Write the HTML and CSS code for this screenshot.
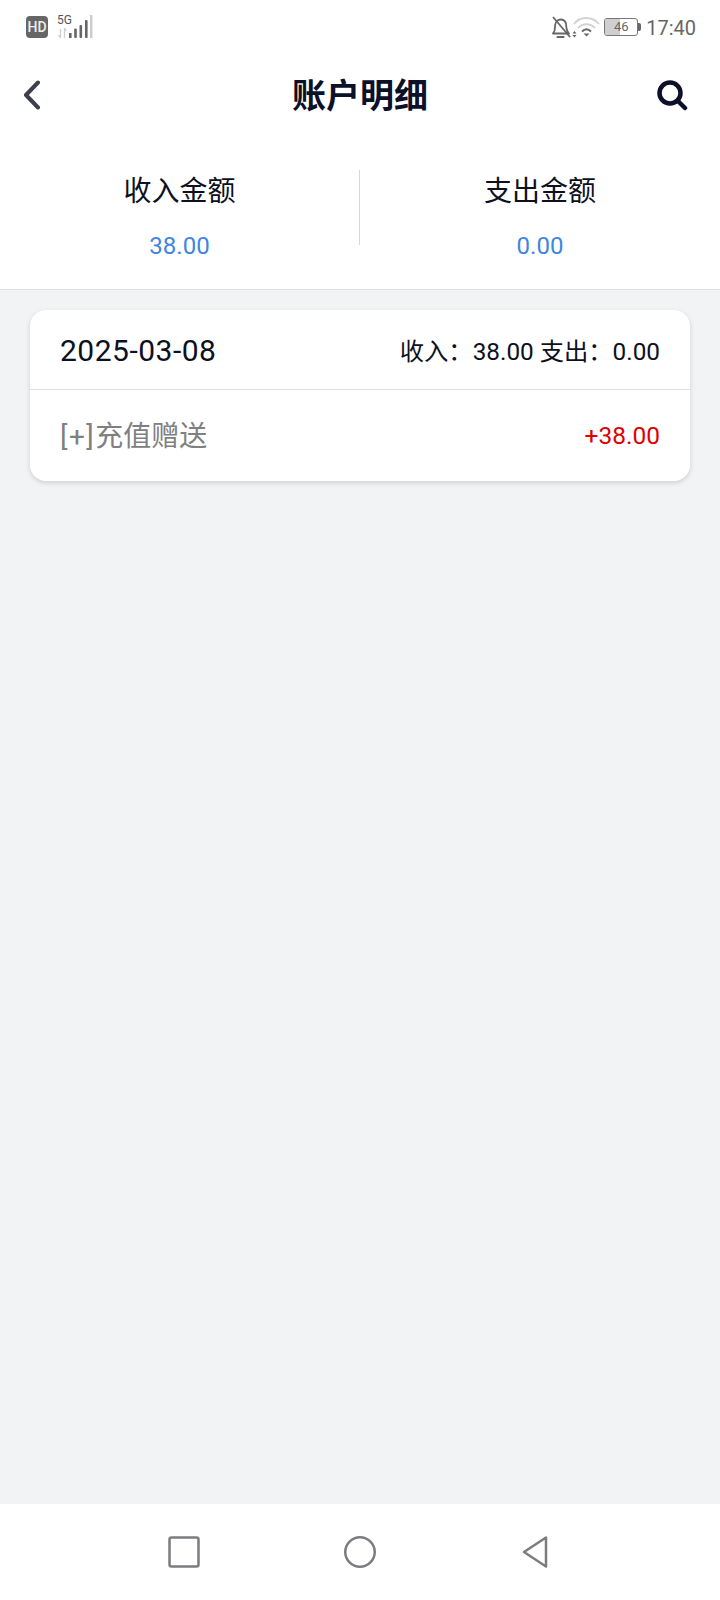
FILE: index.html
```html
<!DOCTYPE html>
<html lang="zh-CN">
<head>
  <meta charset="UTF-8">
  <meta name="viewport" content="width=device-width, initial-scale=1.0">
  <title>账户明细</title>
  <link rel="stylesheet" href="styles.css">
</head>
<body>
  <!-- Status bar -->
  <div class="status-bar">
    <div class="status-left">
      <span class="hd">HD</span>
      <div class="signal">
        <span class="five-g">5G</span>
        <svg width="38" height="26" viewBox="0 0 38 26">
          <g stroke="#d0d0d0" stroke-width="1.300" fill="none">
            <path d="M3.500 16v9M1.500 22l2 3M7.500 15v10M7.500 15l2 3"/>
          </g>
          <g fill="#666">
            <rect x="12" y="20" width="2.600" height="5"/>
            <rect x="17.200" y="15.500" width="2.600" height="9.500" rx="1"/>
            <rect x="22.500" y="12" width="2.600" height="13" rx="1"/>
            <rect x="28" y="7" width="2.600" height="18" rx="1"/>
          </g>
          <rect x="33" y="2" width="2.400" height="23" fill="#ccc"/>
        </svg>
      </div>
    </div>
    <div class="status-right">
      <svg class="bell" width="24" height="24" viewBox="0 0 24 24" fill="none" stroke="#666" stroke-width="1.800">
        <path d="M4 18.500c1.500-1.500 2-3 2-6.500 0-4 2-7.500 5.500-7.500 3 0 4.800 1.500 5.500 4l.5 5c.3 2 1.200 3.500 2.500 5z" stroke-linejoin="round"/>
        <path d="M8.500 22h6" stroke-linecap="round" stroke-width="2.200"/>
        <path d="M4 2l17 20"/>
      </svg>
      <svg class="wifi" width="28" height="24" viewBox="0 0 28 24" fill="none">
        <path d="M2 9C8 1 20 1 27 9" stroke="#d2d2d2" stroke-width="1.800"/>
        <path d="M6 13c5-5 12-5 17 0" stroke="#d2d2d2" stroke-width="1.800"/>
        <path d="M10 16.500c3-3 6-3 9 0" stroke="#666" stroke-width="2"/>
        <path d="M11.500 18.500h6L14.500 21.500z" fill="#666"/>
        <path d="M0.500 18.500l2-2.500 2 2.500zM0.500 20l2 2.500 2-2.500z" fill="#666"/>
      </svg>
      <div class="battery">
        <div class="battery-body">
          <div class="battery-fill"></div>
          <span class="battery-num">46</span>
        </div>
        <div class="battery-cap"></div>
      </div>
      <span class="clock">17:40</span>
    </div>
  </div>

  <!-- Title bar -->
  <div class="nav-bar">
    <svg class="nav-back" width="20" height="30" viewBox="0 0 20 30" fill="none">
      <path d="M15 2.500L3 15l12 12.500" stroke="#3c3f4c" stroke-width="4" stroke-linecap="round" stroke-linejoin="round"/>
    </svg>
    <h1 class="nav-title">账户明细</h1>
    <svg class="nav-search" width="32" height="32" viewBox="0 0 32 32" fill="none">
      <circle cx="14" cy="14" r="10.500" stroke="#0c1028" stroke-width="4.500"/>
      <path d="M22 22l7 7" stroke="#0c1028" stroke-width="4.500" stroke-linecap="round"/>
    </svg>
  </div>

  <!-- Totals -->
  <div class="summary">
    <div class="summary-col">
      <div class="summary-label">收入金额</div>
      <div class="summary-value">38.00</div>
    </div>
    <div class="summary-col">
      <div class="summary-label">支出金额</div>
      <div class="summary-value">0.00</div>
    </div>
  </div>

  <div class="content">
    <div class="card">
      <div class="card-head">
        <span class="card-date">2025-03-08</span>
        <span class="card-total">收入：38.00 支出：0.00</span>
      </div>
      <div class="card-row">
        <span class="row-name"><span class="row-tag">[+]</span>充值赠送</span>
        <span class="row-amount">+38.00</span>
      </div>
    </div>
  </div>

  <!-- System navigation -->
  <div class="sys-nav">
    <svg width="34" height="34" viewBox="0 0 34 34" fill="none">
      <rect x="2.500" y="2.500" width="29" height="29" rx="2" stroke="#7c7c80" stroke-width="2.500"/>
    </svg>
    <svg width="34" height="34" viewBox="0 0 34 34" fill="none">
      <circle cx="17" cy="17" r="14.750" stroke="#7c7c80" stroke-width="2.500"/>
    </svg>
    <svg width="30" height="34" viewBox="0 0 30 34" fill="none">
      <path d="M27 2.500v29L5 17z" stroke="#7c7c80" stroke-width="2.500" stroke-linejoin="round"/>
    </svg>
  </div>
</body>
</html>
```

FILE: styles.css
```css
* {
  box-sizing: border-box;
}
body {
  margin: 0;
  width: 720px;
  height: 1600px;
  display: flex;
  flex-direction: column;
  background: #f2f3f5;
  font-family: Roboto, "Noto Sans CJK SC", sans-serif;
  color: #0c1020;
}
.status-bar {
  height: 54px;
  padding: 13px 24px 0 26px;
  display: flex;
  justify-content: space-between;
  align-items: flex-start;
  background: white;
}
.status-left {
  display: flex;
  align-items: flex-start;
  gap: 9px;
}
.hd {
  width: 22px;
  height: 22px;
  margin-top: 3px;
  border-radius: 4px;
  background: #666;
  color: #eee;
  font-size: 14px;
  font-weight: 500;
  line-height: 22px;
  text-align: center;
}
.signal {
  position: relative;
  width: 38px;
  height: 26px;
}
.five-g {
  position: absolute;
  left: 0;
  top: 1px;
  font-size: 12px;
  line-height: 12px;
  color: #555;
}
.status-right {
  display: flex;
  align-items: center;
  height: 30px;
}
.bell {
  margin-top: -2px;
}
.wifi {
  margin-top: -2px;
  margin-left: -1px;
}
.battery {
  display: flex;
  align-items: center;
  margin-top: -2px;
  margin-left: 4px;
  margin-right: 5px;
}
.battery-body {
  position: relative;
  width: 34px;
  height: 18px;
  border: 1.500px solid #777;
  border-radius: 3px;
  overflow: hidden;
}
.battery-fill {
  width: 46%;
  height: 100%;
  background: #cfcfcf;
}
.battery-num {
  position: absolute;
  left: 0;
  right: 0;
  top: 0;
  font-size: 13px;
  line-height: 15px;
  text-align: center;
  color: #666;
}
.battery-cap {
  width: 3px;
  height: 8px;
  background: #666;
  border-radius: 0 2px 2px 0;
}
.clock {
  font-size: 20px;
  color: #666;
}
.nav-bar {
  position: relative;
  height: 82px;
  padding: 0 32px 0 23px;
  display: flex;
  justify-content: space-between;
  align-items: center;
  background: white;
}
.nav-title {
  position: absolute;
  left: 0;
  right: 0;
  margin: 0;
  padding-bottom: 4px;
  font-size: 34px;
  font-weight: bold;
  text-align: center;
  color: #0c1028;
}
.summary {
  height: 154px;
  padding-top: 34px;
  display: flex;
  background: white;
  border-bottom: 1px solid #dfe0e5;
}
.summary-col {
  width: 359px;
  height: 75px;
  text-align: center;
}
.summary-col + .summary-col {
  width: 361px;
  border-left: 1px solid #d8d8d8;
}
.summary-label {
  padding-top: 2px;
  font-size: 28px;
  line-height: 40px;
}
.summary-value {
  margin-top: 19px;
  font-size: 24px;
  line-height: 30px;
  color: #3f86e0;
}
.content {
  flex: 1;
  padding: 20px 30px 0;
}
.card {
  background: white;
  border-radius: 16px;
  box-shadow: 0 2px 5px rgba(0, 0, 0, 0.15);
}
.card-head {
  height: 80px;
  padding: 0 30px;
  display: flex;
  justify-content: space-between;
  align-items: center;
  border-bottom: 1px solid #dfe0e5;
}
.card-date {
  padding-top: 2px;
  font-size: 30px;
  letter-spacing: 0.5px;
}
.card-total {
  font-size: 24.300px;
}
.card-row {
  height: 91px;
  padding: 0 30px;
  display: flex;
  justify-content: space-between;
  align-items: center;
}
.row-name {
  padding-bottom: 4px;
  font-size: 28px;
  color: #808080;
}
.row-tag {
  letter-spacing: 1.500px;
}
.row-amount {
  font-size: 24.500px;
  color: #e00000;
}
.sys-nav {
  height: 96px;
  padding: 0 171px 0 167px;
  display: flex;
  justify-content: space-between;
  align-items: center;
  background: white;
}
```
